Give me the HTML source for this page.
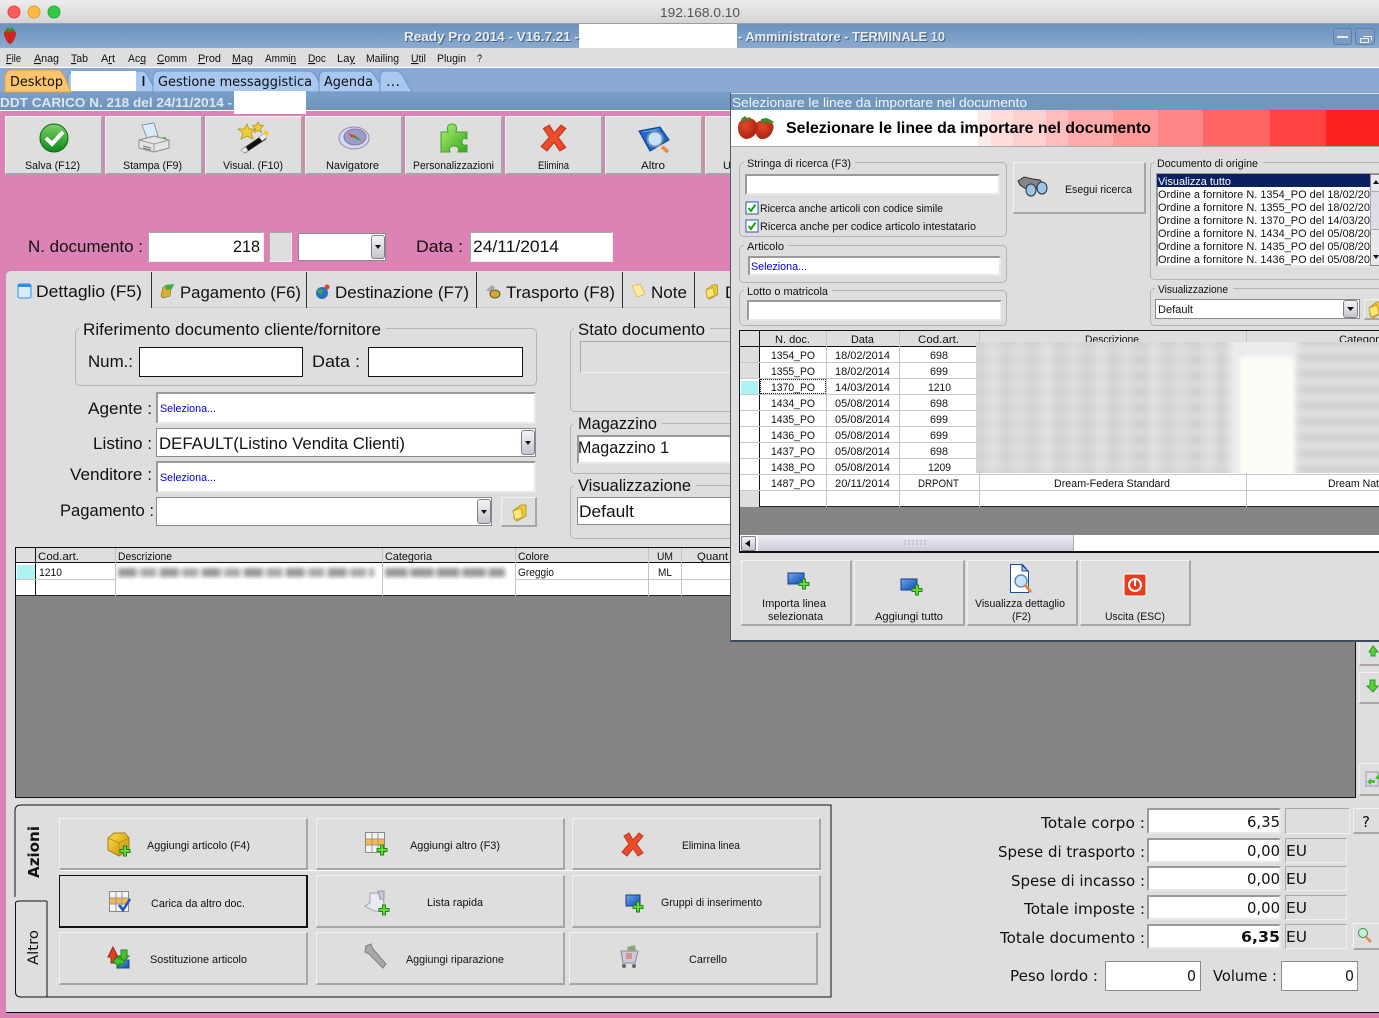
<!DOCTYPE html>
<html lang="it"><head><meta charset="utf-8"><title>Ready Pro 2014</title>
<style>
html,body{margin:0;padding:0}
body{width:1379px;height:1018px;overflow:hidden;position:relative;background:#dd82b4;font-family:"Liberation Sans",sans-serif}
div{position:absolute;box-sizing:border-box}
svg{position:absolute;left:0;top:0;overflow:hidden}
.b{background:#dedede;border:1px solid;border-color:#f2f2f2 #a6a6a6 #a6a6a6 #f2f2f2;border-bottom-width:2px;border-right-width:2px}
.i{background:#fff;border:2px solid;border-color:#9a9a9a #e8e8e8 #e8e8e8 #9a9a9a}
.k{background:#fff;border:1px solid #111}
.q{background:#fff;border:1px solid #8a8a8a}
.f{border:1px solid #b4b4b4;border-radius:5px}
.l{background:#dedede;height:3px}
.d{background:linear-gradient(#f4f4f8,#c4c4cc);border:1px solid #7f7f88;border-radius:3px}
.u{background:#dedede;border:1px solid;border-color:#a8a8a8 #f0f0f0 #f0f0f0 #a8a8a8}
.w{background:#fff}
text{fill:#111;font-family:"Liberation Sans",sans-serif;font-size:11px}
.m{font-size:17px}
.g{font-family:"DejaVu Sans",sans-serif;font-size:15px}
.t{font-family:"DejaVu Sans",sans-serif;font-size:13px}
.h{fill:#e8eef6;font-weight:bold;font-size:13px;filter:drop-shadow(1px 1px 0 #4a5a70)}
.bl{fill:#0000e0}
</style></head><body>

<!-- mac title -->
<div style="left:0;top:0;width:1379px;height:24px;background:linear-gradient(#ececec,#d4d4d4);border-bottom:1px solid #9c9c9c"></div>
<!-- app bar -->
<div style="left:0;top:24px;width:1379px;height:24px;background:linear-gradient(#6a92bd,#8aaad0)"></div>
<div class="w" style="left:579px;top:24px;width:158px;height:24px"></div>
<div style="left:1333px;top:28px;width:19px;height:17px;border:1px solid #5c7ea8;border-radius:3px;background:#7c9cc4"></div>
<div style="left:1355px;top:28px;width:20px;height:17px;border:1px solid #5c7ea8;border-radius:3px;background:#7c9cc4"></div>
<!-- menu -->
<div style="left:0;top:48px;width:1379px;height:20px;background:#dedede;border-bottom:1px solid #fff"></div>
<!-- tab bar -->
<div style="left:0;top:68px;width:1379px;height:24px;background:#8aaad4"></div>
<!-- doc bar -->
<div style="left:0;top:92px;width:1379px;height:19px;background:linear-gradient(#7a9fc8,#6f94bc);border-bottom:1px solid #fff"></div>

<!-- toolbar -->
<div class="b" style="left:5px;top:116px;width:98px;height:59px"></div>
<div class="b" style="left:105px;top:116px;width:98px;height:59px"></div>
<div class="b" style="left:205px;top:116px;width:98px;height:59px"></div>
<div class="b" style="left:305px;top:116px;width:98px;height:59px"></div>
<div class="b" style="left:405px;top:116px;width:98px;height:59px"></div>
<div class="b" style="left:505px;top:116px;width:98px;height:59px"></div>
<div class="b" style="left:605px;top:116px;width:98px;height:59px"></div>
<div class="b" style="left:705px;top:116px;width:98px;height:59px"></div>

<!-- doc fields -->
<div class="u" style="left:148px;top:232px;width:116px;height:30px;background:#fff"></div>
<div class="u" style="left:269px;top:232px;width:23px;height:30px"></div>
<div class="q" style="left:298px;top:233px;width:88px;height:28px"></div>
<div class="d" style="left:371px;top:235px;width:14px;height:24px"></div>
<div class="u" style="left:470px;top:232px;width:143px;height:30px;background:#fff"></div>

<!-- main panel -->
<div style="left:6px;top:271px;width:1373px;height:742px;background:#dedede;border-bottom:1px solid #111;border-top-left-radius:5px"></div>
<div style="left:151px;top:307px;width:1228px;height:1px;background:#c4c4c4"></div>
<div style="left:151px;top:272px;width:1px;height:36px;background:#333"></div>
<div style="left:306px;top:272px;width:1px;height:36px;background:#333"></div>
<div style="left:476px;top:272px;width:1px;height:36px;background:#333"></div>
<div style="left:622px;top:272px;width:1px;height:36px;background:#333"></div>
<div style="left:694px;top:272px;width:1px;height:36px;background:#333"></div>

<!-- groups -->
<div class="f" style="left:75px;top:328px;width:462px;height:58px"></div>
<div class="l" style="left:79px;top:327px;width:307px"></div>
<div class="k" style="left:139px;top:347px;width:164px;height:30px"></div>
<div class="k" style="left:368px;top:347px;width:155px;height:30px"></div>
<div class="i" style="left:156px;top:392px;width:380px;height:32px"></div>
<div class="q" style="left:156px;top:428px;width:380px;height:29px"></div>
<div class="d" style="left:521px;top:430px;width:14px;height:25px"></div>
<div class="i" style="left:156px;top:461px;width:380px;height:32px"></div>
<div class="q" style="left:156px;top:497px;width:336px;height:29px"></div>
<div class="d" style="left:477px;top:499px;width:14px;height:25px"></div>
<div class="b" style="left:501px;top:497px;width:36px;height:30px"></div>
<div class="f" style="left:570px;top:328px;width:300px;height:84px"></div>
<div class="l" style="left:574px;top:327px;width:136px"></div>
<div class="u" style="left:580px;top:341px;width:200px;height:32px"></div>
<div class="f" style="left:570px;top:423px;width:300px;height:51px"></div>
<div class="l" style="left:574px;top:422px;width:88px"></div>
<div class="i" style="left:577px;top:435px;width:200px;height:29px"></div>
<div class="f" style="left:570px;top:485px;width:300px;height:54px"></div>
<div class="l" style="left:574px;top:484px;width:122px"></div>
<div class="q" style="left:577px;top:497px;width:200px;height:28px"></div>

<!-- main grid -->
<div style="left:15px;top:547px;width:1341px;height:251px;background:#848484;border:1px solid #111"></div>
<div style="left:16px;top:548px;width:1339px;height:15px;background:#dedede;border-bottom:1px solid #111"></div>
<div style="left:16px;top:563px;width:1339px;height:33px;background:#fff;border-bottom:1px solid #222"></div>
<div style="left:17px;top:565px;width:18px;height:14px;background:#aef3f3"></div>
<div style="left:35px;top:548px;width:1px;height:48px;background:#111"></div>
<div style="left:16px;top:579px;width:1339px;height:1px;background:#c8c8c8"></div>
<div style="left:115px;top:548px;width:1px;height:48px;background:#c4c4c4"></div>
<div style="left:382px;top:548px;width:1px;height:48px;background:#c4c4c4"></div>
<div style="left:515px;top:548px;width:1px;height:48px;background:#c4c4c4"></div>
<div style="left:648px;top:548px;width:1px;height:48px;background:#c4c4c4"></div>
<div style="left:681px;top:548px;width:1px;height:48px;background:#c4c4c4"></div>
<div style="left:116px;top:564px;width:266px;height:16px;overflow:hidden;background:#fff"><div style="left:2px;top:4px;width:256px;height:9px;filter:blur(2px);background:repeating-linear-gradient(90deg,#999 0 18px,#ddd 18px 23px,#aaa 23px 38px,#eee 38px 42px)"></div></div>
<div style="left:383px;top:564px;width:132px;height:16px;overflow:hidden;background:#fff"><div style="left:2px;top:4px;width:120px;height:9px;filter:blur(2px);background:repeating-linear-gradient(90deg,#999 0 22px,#ddd 22px 26px)"></div></div>

<!-- right side buttons -->
<div class="b" style="left:1359px;top:635px;width:24px;height:31px"></div>
<div class="b" style="left:1359px;top:672px;width:24px;height:32px"></div>
<div class="b" style="left:1359px;top:763px;width:24px;height:33px"></div>

<!-- bottom buttons -->
<div class="b" style="left:59px;top:818px;width:249px;height:52px"></div>
<div class="b" style="left:316px;top:818px;width:249px;height:52px"></div>
<div class="b" style="left:572px;top:818px;width:249px;height:52px"></div>
<div class="b" style="left:59px;top:875px;width:249px;height:53px;border:1px solid #111;border-bottom-width:2px;border-right-width:2px"></div>
<div class="b" style="left:316px;top:875px;width:249px;height:53px"></div>
<div class="b" style="left:572px;top:875px;width:249px;height:53px"></div>
<div class="b" style="left:59px;top:932px;width:249px;height:53px"></div>
<div class="b" style="left:316px;top:932px;width:249px;height:53px"></div>
<div class="b" style="left:569px;top:932px;width:249px;height:53px"></div>
<div class="w" style="left:59px;top:870px;width:762px;height:1px"></div>

<!-- totals -->
<div class="i" style="left:1147px;top:808px;width:134px;height:26px"></div>
<div class="u" style="left:1285px;top:808px;width:65px;height:26px"></div>
<div class="b" style="left:1353px;top:808px;width:28px;height:26px"></div>
<div class="i" style="left:1147px;top:838px;width:134px;height:25px"></div>
<div class="u" style="left:1285px;top:838px;width:62px;height:25px"></div>
<div class="i" style="left:1147px;top:866px;width:134px;height:25px"></div>
<div class="u" style="left:1285px;top:866px;width:62px;height:25px"></div>
<div class="i" style="left:1147px;top:895px;width:134px;height:25px"></div>
<div class="u" style="left:1285px;top:895px;width:62px;height:25px"></div>
<div class="i" style="left:1147px;top:924px;width:134px;height:25px"></div>
<div class="u" style="left:1285px;top:924px;width:62px;height:25px"></div>
<div class="b" style="left:1353px;top:923px;width:28px;height:27px"></div>
<div class="q" style="left:1105px;top:961px;width:96px;height:30px"></div>
<div class="q" style="left:1281px;top:961px;width:77px;height:30px"></div>

<svg width="1379" height="1018" viewBox="0 0 1379 1018" xmlns="http://www.w3.org/2000/svg">
<defs>
<linearGradient id="gg" x1="0" y1="0" x2="0" y2="1"><stop offset="0" stop-color="#7fd06a"/><stop offset="1" stop-color="#0c8a18"/></linearGradient>
<linearGradient id="pz" x1="0" y1="0" x2="1" y2="1"><stop offset="0" stop-color="#b4f070"/><stop offset="1" stop-color="#30a820"/></linearGradient>
<linearGradient id="yy" x1="0" y1="0" x2="1" y2="1"><stop offset="0" stop-color="#ffe050"/><stop offset="1" stop-color="#c08c00"/></linearGradient>
<linearGradient id="bb" x1="0" y1="0" x2="1" y2="1"><stop offset="0" stop-color="#6aa8f0"/><stop offset="1" stop-color="#1048a8"/></linearGradient>
<radialGradient id="rr" cx=".4" cy=".35" r=".75"><stop offset="0" stop-color="#e04828"/><stop offset="1" stop-color="#a81c12"/></radialGradient>
<g id="plus"><path d="M3.5 0h3v3.5H10v3H6.500V10h-3V6.500H0v-3h3.500z" fill="#6ad838" stroke="#1a8a18" stroke-width="1"/></g>
<g id="redx"><path d="M3 4 8 1 12 8 18 1 22 4 15.500 12 22 21 17 24 12 16.500 6 24 1 20 8 12z" fill="#ec4c2c" stroke="#c03820" stroke-width="1"/></g>
<g id="berry"><path d="M1 7C1 3 13 3 13 7 13 12 9 18 7 18 5 18 1 12 1 7z" fill="#c8281e"/><path d="M2 5 5 1 7 3 9 1 12 5 7 6z" fill="#3c8a2c"/></g>
<g id="tbl"><rect x=".5" y=".5" width="19" height="20" fill="#f4f4f4" stroke="#888"/><rect x="1" y="7" width="18" height="6" fill="#f8b848"/><path d="M7 1v19M13 1v19M1 7h18M1 13h18" stroke="#999" fill="none"/></g>
<g id="folder"><path d="M3 7 10 2 15 2 15 13 6 18 3 15z" fill="#f0c830" stroke="#b89a30"/><path d="M2 8 10 5 12 14 4 17z" fill="#ffe878" stroke="#c0a030"/></g>
</defs>

<!-- mac controls -->
<circle cx="14" cy="12" r="6" fill="#fc5b57" stroke="#df4744"/><circle cx="34" cy="12" r="6" fill="#fdbc40" stroke="#de9f34"/><circle cx="54" cy="12" r="6" fill="#33c748" stroke="#27aa35"/>
<text x="660" y="17" textLength="80" lengthAdjust="spacingAndGlyphs" style="font-size:13px;fill:#555">192.168.0.10</text>

<use href="#berry" transform="translate(3 26)"/>
<text class="h" x="404" y="41" textLength="175" lengthAdjust="spacingAndGlyphs">Ready Pro 2014 - V16.7.21 -</text>
<text class="h" x="738" y="41" textLength="207" lengthAdjust="spacingAndGlyphs">- Amministratore - TERMINALE 10</text>
<rect x="1337" y="36" width="11" height="2" fill="#eef"/><path d="M1360.500 38.500h8v4h-8zM1363.500 36.500h8v4" fill="none" stroke="#eef"/>

<!-- menu -->
<g>
<text x="6" y="62" textLength="15" lengthAdjust="spacingAndGlyphs"><tspan text-decoration="underline">F</tspan>ile</text>
<text x="34" y="62" textLength="25" lengthAdjust="spacingAndGlyphs"><tspan text-decoration="underline">A</tspan>nag</text>
<text x="71" y="62" textLength="17" lengthAdjust="spacingAndGlyphs"><tspan text-decoration="underline">T</tspan>ab</text>
<text x="101" y="62" textLength="14" lengthAdjust="spacingAndGlyphs">A<tspan text-decoration="underline">r</tspan>t</text>
<text x="128" y="62" textLength="18" lengthAdjust="spacingAndGlyphs">Ac<tspan text-decoration="underline">q</tspan></text>
<text x="157" y="62" textLength="30" lengthAdjust="spacingAndGlyphs"><tspan text-decoration="underline">C</tspan>omm</text>
<text x="198" y="62" textLength="23" lengthAdjust="spacingAndGlyphs"><tspan text-decoration="underline">P</tspan>rod</text>
<text x="232" y="62" textLength="21" lengthAdjust="spacingAndGlyphs"><tspan text-decoration="underline">M</tspan>ag</text>
<text x="265" y="62" textLength="31" lengthAdjust="spacingAndGlyphs">Ammi<tspan text-decoration="underline">n</tspan></text>
<text x="308" y="62" textLength="18" lengthAdjust="spacingAndGlyphs"><tspan text-decoration="underline">D</tspan>oc</text>
<text x="337" y="62" textLength="18" lengthAdjust="spacingAndGlyphs">La<tspan text-decoration="underline">y</tspan></text>
<text x="366" y="62" textLength="33" lengthAdjust="spacingAndGlyphs">Mailing</text>
<text x="411" y="62" textLength="15" lengthAdjust="spacingAndGlyphs"><tspan text-decoration="underline">U</tspan>til</text>
<text x="437" y="62" textLength="29" lengthAdjust="spacingAndGlyphs">Plugin</text>
<text x="477" y="62" textLength="5" lengthAdjust="spacingAndGlyphs">?</text>
</g>

<!-- tabs -->
<path d="M68 92V78Q68 71 76 71H128Q134 71 137 78L142 92z" fill="#a8c8f0" stroke="#6c94c8"/>
<path d="M132 92V78Q132 71 138 71 H142Q146 71 149 78L156 92z" fill="#a8c8f0" stroke="#6c94c8"/>
<path d="M153 92V78Q153 71 160 71H308Q314 71 317 78L323 92z" fill="#a8c8f0" stroke="#6c94c8"/>
<path d="M319 92V78Q319 71 326 71H368Q373 71 376 78L386 92z" fill="#a8c8f0" stroke="#6c94c8"/>
<path d="M380 92V78Q380 71 386 71H396Q401 71 404 78L412 92z" fill="#a8c8f0" stroke="#6c94c8"/>
<path d="M5 92V78Q5 70 13 70H56Q62 70 65 78L71 92z" fill="#fcc46e" stroke="#e0a040"/>
<rect x="71" y="71" width="65" height="20" fill="#fff"/>
<text class="t" x="10" y="86" textLength="53" lengthAdjust="spacingAndGlyphs">Desktop</text>
<text class="t" x="141" y="86" textLength="5" lengthAdjust="spacingAndGlyphs">I</text>
<text class="t" x="158" y="86" textLength="154" lengthAdjust="spacingAndGlyphs">Gestione messaggistica</text>
<text class="t" x="324" y="86" textLength="49" lengthAdjust="spacingAndGlyphs">Agenda</text>
<text class="t" x="386" y="86" textLength="14" lengthAdjust="spacingAndGlyphs">...</text>

<text class="h" x="0" y="107" textLength="232" lengthAdjust="spacingAndGlyphs" style="filter:none;fill:#dde5f0">DDT CARICO N. 218 del 24/11/2014 -</text>
<rect x="234" y="91" width="72" height="23" fill="#fff"/>

<!-- toolbar icons -->
<circle cx="54" cy="138" r="14" fill="url(#gg)" stroke="#0a6a14"/><path d="M46 138l6 6 11-12" fill="none" stroke="#fff" stroke-width="4"/>
<!-- printer -->
<path d="M142 125l12-2 4 13-11 2z" fill="#d8ecfc" stroke="#8a9aa8"/>
<path d="M139 140l15-4 15 4v8l-15 4-15-4z" fill="#e4e4e4" stroke="#8a8a8a"/>
<path d="M139 140l15 4 15-4M154 144v8" fill="none" stroke="#9a9a9a"/>
<path d="M143 146l8 2M143 148l8 2" stroke="#777" fill="none"/>
<rect x="163" y="137" width="3" height="2" fill="#3cc03c"/>
<!-- wand -->
<path d="M241 150l22-15 3 4-21 14z" fill="#111" stroke="#333" stroke-width=".6"/>
<path d="M241 150l5-3 2 4-4 2zM259 137l6-4 2 4-5 4z" fill="#eee" stroke="#999" stroke-width=".6"/>
<path d="M247 124l2 5 6 0-4 4 2 6-6-3-6 3 2-6-5-4 6 0z" fill="#f5cc30" stroke="#a88a20" stroke-width=".7"/>
<path d="M258 122l1.500 3 4 .5-3 3 1 4-3.500-2-3.500 2 1-4-3-3 4-.5z" fill="#f5cc30" stroke="#a88a20" stroke-width=".7"/>
<circle cx="266" cy="133" r="2.500" fill="#f5cc30"/>
<!-- compass -->
<ellipse cx="354" cy="138" rx="15" ry="11" fill="#d8d8ee" stroke="#8a8ab4"/>
<ellipse cx="355" cy="137" rx="11" ry="8" fill="#9c9cc8" stroke="#7878a8"/>
<path d="M348 133l8 3 3 3-8-2z" fill="#e84020"/><path d="M353 136l4 1 5 4-6-2z" fill="#2e9a3a"/>
<!-- puzzle -->
<path d="M441 132H448Q446 124 452 124 458 124 456 132H467V139Q462 137 462 142 462 146 467 145V152H458Q460 146 454 146 448 146 450 152H441z" fill="url(#pz)" stroke="#48a028"/>
<!-- x -->
<use href="#redx" transform="translate(540 124) scale(1.17 1.12)"/>
<!-- book -->
<path d="M639 131l21-4 9 13-19 11z" fill="#1a68d0" stroke="#0c3c88"/><path d="M643 132l16-3" stroke="#6aa8f0" fill="none"/>
<path d="M662 147l6 5" stroke="#e88a40" stroke-width="3.500"/>
<circle cx="655" cy="139" r="7.500" fill="#c8e4fc" stroke="#7a90a8" stroke-width="2"/>

<text x="25" y="169" textLength="55" lengthAdjust="spacingAndGlyphs">Salva (F12)</text>
<text x="123" y="169" textLength="59" lengthAdjust="spacingAndGlyphs">Stampa (F9)</text>
<text x="223" y="169" textLength="60" lengthAdjust="spacingAndGlyphs">Visual. (F10)</text>
<text x="326" y="169" textLength="53" lengthAdjust="spacingAndGlyphs">Navigatore</text>
<text x="413" y="169" textLength="81" lengthAdjust="spacingAndGlyphs">Personalizzazioni</text>
<text x="538" y="169" textLength="31" lengthAdjust="spacingAndGlyphs">Elimina</text>
<text x="641" y="169" textLength="24" lengthAdjust="spacingAndGlyphs">Altro</text>
<text x="723" y="169">U</text>

<!-- doc line -->
<text class="m" x="28" y="252" textLength="115" lengthAdjust="spacingAndGlyphs">N. documento :</text>
<text class="m" x="233" y="252" textLength="27" lengthAdjust="spacingAndGlyphs">218</text>
<polygon points="375,245 381,245 378,249" fill="#111"/>
<text class="m" x="416" y="252" textLength="47" lengthAdjust="spacingAndGlyphs">Data :</text>
<text class="m" x="473" y="252" textLength="86" lengthAdjust="spacingAndGlyphs">24/11/2014</text>

<!-- tab headers -->
<rect x="18" y="284" width="13" height="14" rx="2" fill="#d8ecfc" stroke="#2a90e8"/><rect x="18" y="284" width="13" height="3" fill="#2a90e8"/>
<text class="m" x="36" y="297" textLength="106" lengthAdjust="spacingAndGlyphs">Dettaglio (F5)</text>
<path d="M161 296l2-9 10-2-2 4-1 7-7 2z" fill="#d8b030" stroke="#7a6a20" stroke-width=".6"/><path d="M165 285l9-1-2 5-6 1z" fill="#3cb040"/>
<text class="m" x="180" y="298" textLength="121" lengthAdjust="spacingAndGlyphs">Pagamento (F6)</text>
<circle cx="322" cy="293" r="6" fill="#2a70c0"/><path d="M317 291q3-3 6-1l-2 5z" fill="#4ca040"/><circle cx="327" cy="287" r="2.500" fill="#e04030"/>
<text class="m" x="335" y="298" textLength="134" lengthAdjust="spacingAndGlyphs">Destinazione (F7)</text>
<path d="M486 290l6-5 3 2-3 6z" fill="#aaa"/><ellipse cx="495" cy="294" rx="5" ry="4" fill="#d8a820" stroke="#554"/>
<text class="m" x="506" y="298" textLength="109" lengthAdjust="spacingAndGlyphs">Trasporto (F8)</text>
<path d="M632 286l8-2 5 10-8 3z" fill="#ffe8a0" stroke="#d8b840" stroke-width=".8"/>
<text class="m" x="651" y="298" textLength="36" lengthAdjust="spacingAndGlyphs">Note</text>
<use href="#folder" transform="translate(704 283) scale(.9)"/>
<text class="m" x="725" y="298">D</text>

<!-- detail -->
<text class="m" x="83" y="335" textLength="298" lengthAdjust="spacingAndGlyphs">Riferimento documento cliente/fornitore</text>
<text class="m" x="88" y="367" textLength="45" lengthAdjust="spacingAndGlyphs">Num.:</text>
<text class="m" x="312" y="367" textLength="48" lengthAdjust="spacingAndGlyphs">Data :</text>
<text class="m" x="88" y="414" textLength="64" lengthAdjust="spacingAndGlyphs">Agente :</text>
<text class="bl" x="160" y="412" textLength="56" lengthAdjust="spacingAndGlyphs">Seleziona...</text>
<text class="m" x="93" y="449" textLength="59" lengthAdjust="spacingAndGlyphs">Listino :</text>
<text class="m" x="159" y="449" textLength="246" lengthAdjust="spacingAndGlyphs">DEFAULT(Listino Vendita Clienti)</text>
<polygon points="525,441 531,441 528,445" fill="#111"/>
<text class="m" x="70" y="480" textLength="82" lengthAdjust="spacingAndGlyphs">Venditore :</text>
<text class="bl" x="160" y="481" textLength="56" lengthAdjust="spacingAndGlyphs">Seleziona...</text>
<text class="m" x="60" y="516" textLength="94" lengthAdjust="spacingAndGlyphs">Pagamento :</text>
<polygon points="481,510 487,510 484,514" fill="#111"/>
<use href="#folder" transform="translate(511 503)"/>
<text class="m" x="578" y="335" textLength="127" lengthAdjust="spacingAndGlyphs">Stato documento</text>
<text class="m" x="578" y="429" textLength="79" lengthAdjust="spacingAndGlyphs">Magazzino</text>
<text class="m" x="578" y="453" textLength="91" lengthAdjust="spacingAndGlyphs">Magazzino 1</text>
<text class="m" x="578" y="491" textLength="113" lengthAdjust="spacingAndGlyphs">Visualizzazione</text>
<text class="m" x="579" y="517" textLength="55" lengthAdjust="spacingAndGlyphs">Default</text>

<!-- main grid text -->
<text x="38" y="560" textLength="41" lengthAdjust="spacingAndGlyphs">Cod.art.</text>
<text x="118" y="560" textLength="54" lengthAdjust="spacingAndGlyphs">Descrizione</text>
<text x="385" y="560" textLength="47" lengthAdjust="spacingAndGlyphs">Categoria</text>
<text x="518" y="560" textLength="31" lengthAdjust="spacingAndGlyphs">Colore</text>
<text x="657" y="560" textLength="16" lengthAdjust="spacingAndGlyphs">UM</text>
<text x="697" y="560" textLength="31" lengthAdjust="spacingAndGlyphs">Quant</text>
<text x="39" y="576" textLength="23" lengthAdjust="spacingAndGlyphs">1210</text>
<text x="518" y="576" textLength="36" lengthAdjust="spacingAndGlyphs">Greggio</text>
<text x="658" y="576" textLength="14" lengthAdjust="spacingAndGlyphs">ML</text>

<!-- right arrows -->
<path d="M1369 652l4-6 5 6h-3v4h-4v-4z" fill="#58d038" stroke="#2a9a20"/>
<path d="M1370 680h5v6h3l-5 6-6-6h3z" fill="#58d038" stroke="#2a9a20"/>
<rect x="1366" y="772" width="12" height="14" fill="#dde" stroke="#99a"/><path d="M1367 782l4-4v2h4v3h-4v2z" fill="#4cc030"/><path d="M1378 774l1 2v3h-4z" fill="#4cc030"/>

<!-- bottom frame -->
<path d="M15 897V811Q15 805 21 805H831V997H47M47 805" fill="none" stroke="#111"/>
<path d="M15.500 903Q15.500 901 20 901H47V997H21Q15.500 997 15.500 992V903" fill="#dedede" stroke="#111"/>
<path d="M47 901V806" stroke="#dedede" fill="none"/>
<text transform="translate(39 878) rotate(-90)" textLength="52" lengthAdjust="spacingAndGlyphs" style="font:bold 15px 'DejaVu Sans',sans-serif">Azioni</text>
<text transform="translate(38 965) rotate(-90)" textLength="35" lengthAdjust="spacingAndGlyphs" style="font:14px 'DejaVu Sans',sans-serif">Altro</text>

<!-- bottom labels -->
<text x="147" y="849" textLength="103" lengthAdjust="spacingAndGlyphs">Aggiungi articolo (F4)</text>
<text x="410" y="849" textLength="90" lengthAdjust="spacingAndGlyphs">Aggiungi altro (F3)</text>
<text x="682" y="849" textLength="58" lengthAdjust="spacingAndGlyphs">Elimina linea</text>
<text x="151" y="907" textLength="94" lengthAdjust="spacingAndGlyphs">Carica da altro doc.</text>
<text x="427" y="906" textLength="56" lengthAdjust="spacingAndGlyphs">Lista rapida</text>
<text x="661" y="906" textLength="101" lengthAdjust="spacingAndGlyphs">Gruppi di inserimento</text>
<text x="150" y="963" textLength="97" lengthAdjust="spacingAndGlyphs">Sostituzione articolo</text>
<text x="406" y="963" textLength="98" lengthAdjust="spacingAndGlyphs">Aggiungi riparazione</text>
<text x="689" y="963" textLength="38" lengthAdjust="spacingAndGlyphs">Carrello</text>

<!-- bottom icons -->
<path d="M108 838l6-5h11l4 5v12l-10 6-11-6z" fill="url(#yy)" stroke="#a08010"/><path d="M108 838l11 5 10-5M119 843v13" fill="none" stroke="#b89410"/><use href="#plus" transform="translate(120 846)"/>
<use href="#tbl" transform="translate(365 832)"/><use href="#plus" transform="translate(377 845)"/>
<use href="#redx" transform="translate(621 832)"/>
<use href="#tbl" transform="translate(109 891)"/><path d="M119 905l4 5 7-11" fill="none" stroke="#1a50c8" stroke-width="2.500"/>
<path d="M370 893h12l2 10-2 8h-8l-9-5 5-3z" fill="#eaeaf0" stroke="#a0a0ac"/><path d="M378 891h6v8h-4z" fill="#c8c8d4" stroke="#9a9aa8"/><use href="#plus" transform="translate(379 905)"/>
<rect x="626" y="895" width="14" height="11" fill="url(#bb)" stroke="#1a3c88"/><use href="#plus" transform="translate(633 902)"/>
<path d="M108 957l5-10 5 10h-3v6h-4v-6z" fill="#e04020" stroke="#902818"/><path d="M117 960h12v8h-12z" fill="url(#bb)" stroke="#1a4c98"/><path d="M113 961l6-5v3h5v5h-5v3z" fill="#48c030" stroke="#208818"/><path d="M121 950h6v6h2l-5 5-5-5h2z" fill="#48c030" stroke="#208818"/>
<path d="M366 946l5-2 2 5 13 15-3 4-14-14-4-2z" fill="#a8a8a8" stroke="#808080"/>
<path d="M621 951h17l-3 12h-12z" fill="#cfc8d8" stroke="#8a8a96"/><circle cx="624" cy="966" r="2" fill="#666"/><circle cx="634" cy="966" r="2" fill="#666"/><path d="M627 947l8-2 1 6h-8z" fill="#88a878"/><path d="M626 953h6v6h-6z" fill="#d89090"/>

<!-- totals text -->
<g class="x">
<text class="g" x="1041" y="828" textLength="104" lengthAdjust="spacingAndGlyphs">Totale corpo :</text>
<text class="g" x="998" y="857" textLength="147" lengthAdjust="spacingAndGlyphs">Spese di trasporto :</text>
<text class="g" x="1011" y="886" textLength="134" lengthAdjust="spacingAndGlyphs">Spese di incasso :</text>
<text class="g" x="1024" y="914" textLength="121" lengthAdjust="spacingAndGlyphs">Totale imposte :</text>
<text class="g" x="1000" y="943" textLength="145" lengthAdjust="spacingAndGlyphs">Totale documento :</text>
<text class="g" x="1247" y="827" textLength="33" lengthAdjust="spacingAndGlyphs">6,35</text>
<text class="g" x="1247" y="856" textLength="33" lengthAdjust="spacingAndGlyphs">0,00</text>
<text class="g" x="1247" y="884" textLength="33" lengthAdjust="spacingAndGlyphs">0,00</text>
<text class="g" x="1247" y="913" textLength="33" lengthAdjust="spacingAndGlyphs">0,00</text>
<text class="g" x="1241" y="942" textLength="39" lengthAdjust="spacingAndGlyphs" style="font-weight:bold">6,35</text>
<text class="g" x="1286" y="856" textLength="21" lengthAdjust="spacingAndGlyphs">EU</text>
<text class="g" x="1286" y="884" textLength="21" lengthAdjust="spacingAndGlyphs">EU</text>
<text class="g" x="1286" y="913" textLength="21" lengthAdjust="spacingAndGlyphs">EU</text>
<text class="g" x="1286" y="942" textLength="21" lengthAdjust="spacingAndGlyphs">EU</text>
<text class="g" x="1362" y="827" textLength="8" lengthAdjust="spacingAndGlyphs">?</text>
<text class="g" x="1010" y="981" textLength="88" lengthAdjust="spacingAndGlyphs">Peso lordo :</text>
<text class="g" x="1187" y="981" textLength="9" lengthAdjust="spacingAndGlyphs">0</text>
<text class="g" x="1213" y="981" textLength="64" lengthAdjust="spacingAndGlyphs">Volume :</text>
<text class="g" x="1345" y="981" textLength="9" lengthAdjust="spacingAndGlyphs">0</text>
</g>
<circle cx="1363" cy="933" r="4.500" fill="#c8f0c8" stroke="#3a8a6a"/><path d="M1366 937l5 5" stroke="#e88a40" stroke-width="2.500"/>
</svg>

<!-- DIALOG -->
<div style="left:730px;top:93px;width:649px;height:549px;background:#dedede;border-left:1px solid #4a5a70;border-bottom:2px solid #3c4c60"></div>
<div style="left:731px;top:94px;width:648px;height:16px;background:#7297bd"></div>
<div style="left:731px;top:110px;width:648px;height:37px;border-bottom:1px solid #aaa;background:linear-gradient(90deg,#fff 0,#fff 247px,#ffeaea 247px,#ffeaea 260px,#ffdddd 260px,#ffdddd 282px,#ffd0d0 282px,#ffd0d0 315px,#ffbdbd 315px,#ffbdbd 337px,#ffabab 337px,#ffabab 382px,#ff9999 382px,#ff9999 427px,#ff8686 427px,#ff8686 472px,#ff6565 472px,#ff6565 539px,#ff4343 539px,#ff4343 595px,#ff2020 595px)"></div>

<div class="f" style="left:739px;top:162px;width:268px;height:75px"></div>
<div class="l" style="left:744px;top:161px;width:111px"></div>
<div class="i" style="left:745px;top:174px;width:255px;height:21px"></div>
<div class="f" style="left:739px;top:245px;width:268px;height:38px"></div>
<div class="l" style="left:744px;top:244px;width:44px"></div>
<div class="i" style="left:748px;top:256px;width:253px;height:20px"></div>
<div class="f" style="left:739px;top:290px;width:268px;height:36px"></div>
<div class="l" style="left:744px;top:289px;width:88px"></div>
<div class="i" style="left:747px;top:300px;width:255px;height:21px"></div>
<div class="b" style="left:1013px;top:162px;width:133px;height:52px"></div>
<div class="f" style="left:1150px;top:162px;width:260px;height:118px"></div>
<div class="l" style="left:1155px;top:161px;width:108px"></div>
<div class="i" style="left:1156px;top:173px;width:240px;height:94px"></div>
<div class="f" style="left:1150px;top:288px;width:260px;height:38px"></div>
<div class="l" style="left:1155px;top:287px;width:78px"></div>
<div class="q" style="left:1155px;top:299px;width:205px;height:20px"></div>
<div class="d" style="left:1343px;top:300px;width:15px;height:18px"></div>
<div class="b" style="left:1364px;top:299px;width:30px;height:21px"></div>

<!-- dialog grid -->
<div style="left:739px;top:330px;width:660px;height:223px;background:#858585;border:1px solid #111"></div>
<div style="left:740px;top:331px;width:640px;height:16px;background:#dedede;border-bottom:1px solid #111"></div>
<div style="left:740px;top:347px;width:640px;height:160px;background:#fff;border-bottom:1px solid #222"></div>
<div style="left:740px;top:347px;width:19px;height:32px;background:#dedede"></div>
<div style="left:741px;top:381px;width:17px;height:13px;background:#aef3f3"></div>
<div style="left:740px;top:491px;width:19px;height:16px;background:#dedede"></div>
<div style="left:759px;top:331px;width:1px;height:176px;background:#111"></div>
<div style="left:826px;top:331px;width:1px;height:176px;background:#c4c4c4"></div>
<div style="left:899px;top:331px;width:1px;height:176px;background:#c4c4c4"></div>
<div style="left:979px;top:331px;width:1px;height:176px;background:#c4c4c4"></div>
<div style="left:1246px;top:331px;width:1px;height:176px;background:#c4c4c4"></div>
<div style="left:740px;top:362px;width:640px;height:1px;background:#c8c8c8"></div>
<div style="left:740px;top:378px;width:640px;height:1px;background:#c8c8c8"></div>
<div style="left:740px;top:394px;width:640px;height:1px;background:#c8c8c8"></div>
<div style="left:740px;top:410px;width:640px;height:1px;background:#c8c8c8"></div>
<div style="left:740px;top:426px;width:640px;height:1px;background:#c8c8c8"></div>
<div style="left:740px;top:442px;width:640px;height:1px;background:#c8c8c8"></div>
<div style="left:740px;top:458px;width:640px;height:1px;background:#c8c8c8"></div>
<div style="left:740px;top:474px;width:640px;height:1px;background:#c8c8c8"></div>
<div style="left:740px;top:490px;width:640px;height:1px;background:#c8c8c8"></div>
<div style="left:760px;top:379px;width:66px;height:15px;border:1px dotted #111"></div>
<!-- scrollbar -->
<div style="left:740px;top:535px;width:640px;height:16px;background:#fff"></div>
<div class="d" style="left:741px;top:536px;width:15px;height:15px;border-radius:2px"></div>
<div style="left:758px;top:535px;width:316px;height:16px;background:linear-gradient(#eeeef4,#ccccd8);border-right:1px solid #aaa"></div>
<div style="left:740px;top:551px;width:640px;height:1px;background:#111"></div>
<!-- dialog buttons -->
<div class="b" style="left:741px;top:560px;width:111px;height:66px"></div>
<div class="b" style="left:854px;top:560px;width:111px;height:66px"></div>
<div class="b" style="left:967px;top:560px;width:111px;height:66px"></div>
<div class="b" style="left:1080px;top:560px;width:111px;height:66px"></div>

<svg width="1379" height="1018" viewBox="0 0 1379 1018" xmlns="http://www.w3.org/2000/svg">
<text x="732" y="107" textLength="295" lengthAdjust="spacingAndGlyphs" style="font-size:13px;fill:#f0f4fa">Selezionare le linee da importare nel documento</text>
<!-- strawberries -->
<path d="M755 127C755 122 760 120 765 120 771 120 775 124 773 130 771 136 767 139 762 139 757 139 755 133 755 127z" fill="url(#rr)"/>
<path d="M738 128C738 120 744 118 748 118 754 118 758 122 757 130 756 136 750 139 746 139 741 138 738 134 738 128z" fill="url(#rr)"/>
<path d="M741 119l4-3 2 2 3-1 1 4-5-1-3 2zM761 119l5-1 3 1 5 3-3 2-5-2-4 2z" fill="#3c8a2c"/>
<text x="786" y="133" textLength="365" lengthAdjust="spacingAndGlyphs" style="font-size:16px;font-weight:bold;fill:#000">Selezionare le linee da importare nel documento</text>

<text x="747" y="167" textLength="104" lengthAdjust="spacingAndGlyphs">Stringa di ricerca (F3)</text>
<rect x="746" y="202" width="12" height="12" fill="#fff" stroke="#2a5aa8"/><path d="M748.500 208l2.500 3 4.500-6.500" fill="none" stroke="#18a018" stroke-width="2"/>
<text x="760" y="212" textLength="183" lengthAdjust="spacingAndGlyphs">Ricerca anche articoli con codice simile</text>
<rect x="746" y="220" width="12" height="12" fill="#fff" stroke="#2a5aa8"/><path d="M748.500 226l2.500 3 4.500-6.500" fill="none" stroke="#18a018" stroke-width="2"/>
<text x="760" y="230" textLength="216" lengthAdjust="spacingAndGlyphs">Ricerca anche per codice articolo intestatario</text>
<text x="747" y="250" textLength="37" lengthAdjust="spacingAndGlyphs">Articolo</text>
<text class="bl" x="751" y="270" textLength="56" lengthAdjust="spacingAndGlyphs">Seleziona...</text>
<text x="747" y="295" textLength="81" lengthAdjust="spacingAndGlyphs">Lotto o matricola</text>
<!-- binoculars -->
<path d="M1018 181l6-4 9 2 7 1 4 5-9 3-2 5-7-4-6-4z" fill="#84848c" stroke="#333"/><ellipse cx="1031" cy="190" rx="5" ry="6" fill="#9cc4e8" stroke="#333"/><ellipse cx="1042" cy="188" rx="5" ry="6" fill="#9cc4e8" stroke="#333"/>
<text x="1065" y="193" textLength="67" lengthAdjust="spacingAndGlyphs">Esegui ricerca</text>

<text x="1157" y="167" textLength="101" lengthAdjust="spacingAndGlyphs">Documento di origine</text>
<rect x="1157" y="174" width="213" height="13" fill="#0a2060"/>
<text x="1158" y="185" textLength="73" lengthAdjust="spacingAndGlyphs" style="fill:#fff">Visualizza tutto</text>
<text x="1158" y="198" textLength="212" lengthAdjust="spacingAndGlyphs">Ordine a fornitore N. 1354_PO del 18/02/20</text>
<text x="1158" y="211" textLength="212" lengthAdjust="spacingAndGlyphs">Ordine a fornitore N. 1355_PO del 18/02/20</text>
<text x="1158" y="224" textLength="212" lengthAdjust="spacingAndGlyphs">Ordine a fornitore N. 1370_PO del 14/03/20</text>
<text x="1158" y="237" textLength="212" lengthAdjust="spacingAndGlyphs">Ordine a fornitore N. 1434_PO del 05/08/20</text>
<text x="1158" y="250" textLength="212" lengthAdjust="spacingAndGlyphs">Ordine a fornitore N. 1435_PO del 05/08/20</text>
<text x="1158" y="263" textLength="212" lengthAdjust="spacingAndGlyphs">Ordine a fornitore N. 1436_PO del 05/08/20</text>
<rect x="1370.500" y="174.500" width="9" height="91" fill="#e8e8ee" stroke="#888"/>
<rect x="1370.500" y="191.500" width="9" height="38" fill="#dcdce4" stroke="#aaa"/>
<polygon points="1373,184 1379,184 1376,180" fill="#111"/><polygon points="1373,255 1379,255 1376,259" fill="#111"/>

<text x="1158" y="293" textLength="70" lengthAdjust="spacingAndGlyphs">Visualizzazione</text>
<text x="1158" y="313" textLength="35" lengthAdjust="spacingAndGlyphs">Default</text>
<polygon points="1347,307 1354,307 1350.500,311" fill="#111"/>
<use href="#folder" transform="translate(1367 300)"/>

<text x="775" y="343" textLength="35" lengthAdjust="spacingAndGlyphs">N. doc.</text>
<text x="851" y="343" textLength="23" lengthAdjust="spacingAndGlyphs">Data</text>
<text x="918" y="343" textLength="41" lengthAdjust="spacingAndGlyphs">Cod.art.</text>
<text x="1085" y="343" textLength="54" lengthAdjust="spacingAndGlyphs">Descrizione</text>
<text x="1339" y="343" textLength="40" lengthAdjust="spacingAndGlyphs">Categor</text>

<text x="771" y="359" textLength="44" lengthAdjust="spacingAndGlyphs">1354_PO</text><text x="835" y="359" textLength="55" lengthAdjust="spacingAndGlyphs">18/02/2014</text><text x="930" y="359" textLength="18" lengthAdjust="spacingAndGlyphs">698</text>
<text x="771" y="375" textLength="44" lengthAdjust="spacingAndGlyphs">1355_PO</text><text x="835" y="375" textLength="55" lengthAdjust="spacingAndGlyphs">18/02/2014</text><text x="930" y="375" textLength="18" lengthAdjust="spacingAndGlyphs">699</text>
<text x="771" y="391" textLength="44" lengthAdjust="spacingAndGlyphs">1370_PO</text><text x="835" y="391" textLength="55" lengthAdjust="spacingAndGlyphs">14/03/2014</text><text x="928" y="391" textLength="23" lengthAdjust="spacingAndGlyphs">1210</text>
<text x="771" y="407" textLength="44" lengthAdjust="spacingAndGlyphs">1434_PO</text><text x="835" y="407" textLength="55" lengthAdjust="spacingAndGlyphs">05/08/2014</text><text x="930" y="407" textLength="18" lengthAdjust="spacingAndGlyphs">698</text>
<text x="771" y="423" textLength="44" lengthAdjust="spacingAndGlyphs">1435_PO</text><text x="835" y="423" textLength="55" lengthAdjust="spacingAndGlyphs">05/08/2014</text><text x="930" y="423" textLength="18" lengthAdjust="spacingAndGlyphs">699</text>
<text x="771" y="439" textLength="44" lengthAdjust="spacingAndGlyphs">1436_PO</text><text x="835" y="439" textLength="55" lengthAdjust="spacingAndGlyphs">05/08/2014</text><text x="930" y="439" textLength="18" lengthAdjust="spacingAndGlyphs">699</text>
<text x="771" y="455" textLength="44" lengthAdjust="spacingAndGlyphs">1437_PO</text><text x="835" y="455" textLength="55" lengthAdjust="spacingAndGlyphs">05/08/2014</text><text x="930" y="455" textLength="18" lengthAdjust="spacingAndGlyphs">698</text>
<text x="771" y="471" textLength="44" lengthAdjust="spacingAndGlyphs">1438_PO</text><text x="835" y="471" textLength="55" lengthAdjust="spacingAndGlyphs">05/08/2014</text><text x="928" y="471" textLength="23" lengthAdjust="spacingAndGlyphs">1209</text>
<text x="771" y="487" textLength="44" lengthAdjust="spacingAndGlyphs">1487_PO</text><text x="835" y="487" textLength="55" lengthAdjust="spacingAndGlyphs">20/11/2014</text><text x="918" y="487" textLength="41" lengthAdjust="spacingAndGlyphs">DRPONT</text>
<text x="1054" y="487" textLength="116" lengthAdjust="spacingAndGlyphs">Dream-Federa Standard</text>
<text x="1328" y="487" textLength="51" lengthAdjust="spacingAndGlyphs">Dream Nat</text>

<polygon points="750,540 750,547 745,543.500" fill="#111"/>
<path d="M904 541h22M904 544h22" stroke="#a8a8b4" stroke-dasharray="2 2"/>

<!-- dialog button icons -->
<rect x="788" y="573" width="16" height="11" fill="url(#bb)" stroke="#1a3c88"/><use href="#plus" transform="translate(799 579)"/>
<text x="762" y="607" textLength="64" lengthAdjust="spacingAndGlyphs">Importa linea</text>
<text x="768" y="620" textLength="55" lengthAdjust="spacingAndGlyphs">selezionata</text>
<rect x="901" y="579" width="16" height="11" fill="url(#bb)" stroke="#1a3c88"/><use href="#plus" transform="translate(912 585)"/>
<text x="875" y="620" textLength="68" lengthAdjust="spacingAndGlyphs">Aggiungi tutto</text>
<path d="M1010.500 564.500h12l6 7v21h-18z" fill="#fff" stroke="#1a4c98"/><path d="M1022 565v6h6z" fill="#a8c4e8" stroke="#1a4c98"/><circle cx="1021" cy="581" r="6" fill="#c8e4fc" stroke="#6a8ca8" stroke-width="1.500"/><path d="M1025 585l6 7" stroke="#e88a40" stroke-width="3"/>
<text x="975" y="607" textLength="90" lengthAdjust="spacingAndGlyphs">Visualizza dettaglio</text>
<text x="1012" y="620" textLength="19" lengthAdjust="spacingAndGlyphs">(F2)</text>
<rect x="1124" y="574" width="22" height="22" rx="2" fill="#e83c20" stroke="#fff"/><circle cx="1135" cy="585" r="6" fill="none" stroke="#fff" stroke-width="2"/><rect x="1134" y="579" width="2" height="7" fill="#fff"/>
<text x="1105" y="620" textLength="60" lengthAdjust="spacingAndGlyphs">Uscita (ESC)</text>
</svg>

<!-- blurred area -->
<div style="left:976px;top:342px;width:403px;height:131px;background:#e2e2e2;overflow:hidden">
  <div style="left:-6px;top:-2px;width:268px;height:136px;filter:blur(4px);background:repeating-linear-gradient(180deg,#cbcbcb 0 8px,#dedede 8px 16px)"></div>
  <div style="left:-6px;top:-4px;width:268px;height:140px;filter:blur(5px);background:repeating-linear-gradient(90deg,rgba(236,236,236,0) 0 18px,rgba(236,236,236,.7) 18px 27px,rgba(236,236,236,0) 27px 44px,rgba(236,236,236,.5) 44px 54px)"></div>
  <div style="left:254px;top:-6px;width:70px;height:145px;filter:blur(4px);background:#ececec"></div>
  <div style="left:264px;top:15px;width:55px;height:125px;filter:blur(2.500px);background:#fdfdf8"></div>
  <div style="left:322px;top:-4px;width:92px;height:140px;filter:blur(3.500px);background:repeating-linear-gradient(180deg,#cccccc 0 8px,#e4e4e4 8px 16px)"></div>
</div>
</body></html>
